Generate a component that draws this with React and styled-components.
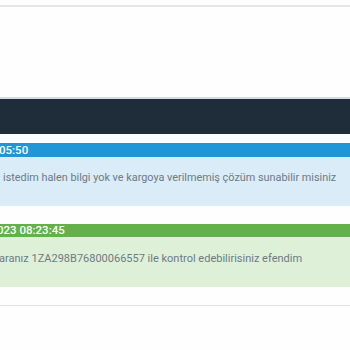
import styled, { createGlobalStyle } from 'styled-components'

const GlobalStyle = createGlobalStyle`
  html, body {
    margin: 0;
    padding: 0;
    background: #fefefe;
    font-family: Roboto, "Liberation Sans", Arial, sans-serif;
  }
`

const Page = styled.div`
  width: 350px;
  height: 350px;
  overflow: hidden;
  background: #fefefe;
`

const TopPanel = styled.div`
  margin-top: 5px;
  height: 90px;
  border-top: 2px solid #e6e6e6;
`

const DarkBar = styled.div`
  height: 35px;
  background: #1f2c3a;
  border-top: 2px solid #d6dbe0;
`

const Messages = styled.div`
  display: flex;
  flex-direction: column;
  gap: 18px;
  padding-top: 9px;
`

const Message = styled.div`
  display: flex;
  flex-direction: column;
`

const MessageHeader = styled.div`
  height: ${(p) => p.$h}px;
  background: ${(p) => p.$bg};
  color: #ffffff;
  font-size: 11.5px;
  font-weight: 500;
  line-height: ${(p) => p.$h}px;
  white-space: nowrap;
  overflow: hidden;
  text-indent: ${(p) => p.$indent}px;
`

const MessageBody = styled.div`
  height: ${(p) => p.$h}px;
  box-sizing: border-box;
  padding-top: ${(p) => p.$pt}px;
  background: ${(p) => p.$bg};
  color: #6d7a85;
  font-size: ${(p) => p.$size}px;
  line-height: 16px;
  white-space: nowrap;
  overflow: hidden;
  text-indent: ${(p) => p.$indent}px;
`

const Divider = styled.div`
  margin-top: 18px;
  border-top: 1px solid #e2e2e2;
`

export default function App() {
  return (
    <>
      <GlobalStyle />
      <Page>
        <TopPanel />
        <DarkBar />
        <Messages>
          <Message>
            <MessageHeader $h={14} $bg="#1f97d7" $indent={-1}>05:50</MessageHeader>
            <MessageBody $h={49} $bg="#d9ecf7" $pt={13} $indent={3} $size={10.85}>
              istedim halen bilgi yok ve kargoya verilmemiş çözüm sunabilir misiniz
            </MessageBody>
          </Message>
          <Message>
            <MessageHeader $h={13} $bg="#64b04b" $indent={-3}>023 08:23:45</MessageHeader>
            <MessageBody $h={50} $bg="#dff0d8" $pt={14} $indent={-1} $size={11}>
              aranız 1ZA298B76800066557 ile kontrol edebilirisiniz efendim
            </MessageBody>
          </Message>
        </Messages>
        <Divider />
      </Page>
    </>
  )
}
